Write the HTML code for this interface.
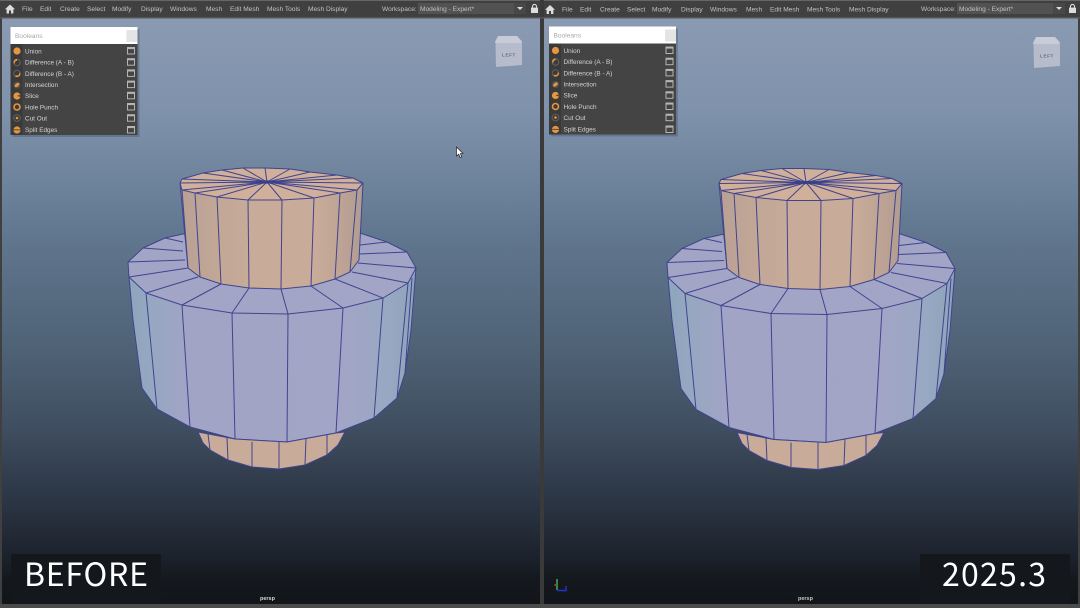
<!DOCTYPE html>
<html><head><meta charset="utf-8"><title>Booleans comparison</title>
<style>
html,body{margin:0;padding:0;background:#3a3a3a;width:1080px;height:608px;overflow:hidden}
svg{display:block}
text{font-family:"Liberation Sans",sans-serif}
.m{font-size:6.6px;fill:#c2c2c2}
.i{font-size:6.4px;fill:#d4d4d4}
.big{font-family:"Noto Sans CJK KR","Liberation Sans",sans-serif;font-size:32px;fill:#fff;font-weight:400}
.l{stroke:#40448f;stroke-width:1;fill:none}
</style></head><body>
<svg width="1080" height="608" viewBox="0 0 1080 608" xmlns="http://www.w3.org/2000/svg">
<defs>
<linearGradient id="bg" x1="0" y1="18" x2="0" y2="604" gradientUnits="userSpaceOnUse">
<stop offset="0" stop-color="#8a9ab2"/><stop offset=".16" stop-color="#7f92ab"/><stop offset=".3" stop-color="#6b8199"/>
<stop offset=".36" stop-color="#627890"/><stop offset=".55" stop-color="#506478"/><stop offset=".7" stop-color="#3f4e60"/>
<stop offset=".82" stop-color="#2c3645"/><stop offset=".92" stop-color="#1c222c"/><stop offset=".96" stop-color="#14181d"/><stop offset="1" stop-color="#12161a"/>
</linearGradient>
<linearGradient id="blue" x1="129" y1="0" x2="416" y2="0" gradientUnits="userSpaceOnUse">
<stop offset="0" stop-color="#8ea6bc"/><stop offset=".08" stop-color="#96a7c1"/><stop offset=".2" stop-color="#a1a4c5"/>
<stop offset=".75" stop-color="#a2a5c6"/><stop offset=".9" stop-color="#98a8c2"/><stop offset="1" stop-color="#8ca4ba"/>
</linearGradient>
<linearGradient id="pk" x1="180" y1="0" x2="363" y2="0" gradientUnits="userSpaceOnUse">
<stop offset="0" stop-color="#b8a094"/><stop offset=".2" stop-color="#c2a797"/><stop offset=".4" stop-color="#c8ab98"/>
<stop offset=".75" stop-color="#c8ab98"/><stop offset=".9" stop-color="#bca295"/><stop offset="1" stop-color="#b09c91"/>
</linearGradient>
<g id="model">
<!-- body -->
<path fill="url(#blue)" d="M128 262L129 277L133 320L142 388L157 409L190 427L235 439L287 442L336 433L374 418L397 398L405 373L411 330L416 268Z"/>
<path class="l" d="M129 277L133 320L142 388L157 409L190 427L235 439L287 442L336 433L374 418L397 398L405 373L411 330L416 268"/>
<path class="l" d="M146 293L157 409M182 305L190 427M232 313L235 439M288 314L287 442M343 308L336 433M383 298L374 418M408 283L397 398M412 278L405 373"/>
<!-- bottom cylinder -->
<path fill="#c8ab98" stroke="#40448f" d="M198 432L203 443L210 450L228 460L252 467L279 469L305 465L327 455L338 445L345 432L336 433L287 442L235 439Z"/>
<path class="l" d="M208 434L210 450M227 438L228 460M252 442L252 467M279 442L279 469M306 438L305 465M327 435L327 455"/>
<!-- ring top -->
<path fill="#a3a5c6" stroke="#40448f" stroke-linejoin="round" d="M128 262L143 248L165 238L183 234L360 233L387 242L407 252L416 268L408 283L383 298L343 308L288 314L232 313L182 305L146 293L129 277Z"/>
<path class="l" d="M198 277L146 293M221 284L182 305M249 288L232 313M281 289L288 314M311 286L343 308M335 279L383 298M352 272L408 283M358 263L416 268M359 254L407 252M360 245L387 242M188 268L129 277M185 260L128 262M183 251L143 248M183 242L165 238"/>
<!-- top cylinder side -->
<path fill="url(#pk)" d="M180 183L188 268L200 277L221 284L249 288L281 289L311 286L335 279L350 272L359 260L363 183Z"/>
<path class="l" d="M180 183L188 268L200 277L221 284L249 288L281 289L311 286L335 279L350 272L359 260L363 183"/>
<path class="l" d="M182 190L188 268M195 193L200 277M217 197L221 284M248 200L249 288M282 200L281 289M314 198L311 286M340 193L335 279M357 190L350 272"/>
<!-- top cap -->
<path fill="#d0b09b" stroke="#40448f" stroke-linejoin="round" d="M180 183L182 179L203 173L222 170L243 168L265 168L290 169L310 172L337 175L353 178L363 183L357 190L340 193L314 198L282 200L248 200L217 197L195 193L182 190Z"/>
<path class="l" d="M267 182L248 200M267 182L282 200M267 182L217 197M267 182L195 193M267 182L182 190M267 182L180 183M267 182L182 179M267 182L203 173M267 182L222 170M267 182L243 168M267 182L265 168M267 182L290 169M267 182L310 172M267 182L337 175M267 182L353 178M267 182L363 183M267 182L357 190M267 182L340 193M267 182L314 198"/>
<ellipse cx="267" cy="182" rx="12" ry="1.6" fill="#3b3f88"/>
</g>
<g id="box"><rect x="0" y="0" width="7" height="6.5" fill="none" stroke="#b5b5b5" stroke-width="1"/><rect x="0" y="0" width="7" height="1.6" fill="#b5b5b5"/></g>
<g id="home"><path d="M5 0.5L0 5.2H1.6V9.5H4V6.5H6V9.5H8.4V5.2H10Z" fill="#ddd"/></g>
<g id="lock"><rect x="0" y="3.6" width="7" height="5.4" fill="#ddd"/><path d="M1.5 3.6V2.4a2 2 0 0 1 4 0V3.6" fill="none" stroke="#ddd" stroke-width="1.1"/></g>
<g id="panel">
<rect x="2" y="2" width="127" height="108" fill="#33415a" opacity=".3"/>
<rect x="0" y="0" width="127" height="17" fill="#fff"/>
<rect x="116" y="3" width="11" height="12" fill="#e4e4e4"/>
<text x="4.500" y="11" fill="#a8a8a8" style="font-size:6.6px">Booleans</text>
<rect x="0" y="17" width="127" height="91" fill="#444"/>
<rect x="0" y="17" width="12" height="91" fill="#3a3a3a"/>
<g fill="#e8963d">
<circle cx="6.500" cy="24" r="3.600"/>
<circle cx="6.500" cy="35.500" r="3.300" fill="none" stroke="#666" stroke-width="1"/><path d="M3 35.500a3.600 3.600 0 0 1 3.500-3.600v2a2 2 0 0 0-1.500 3.500z"/>
<circle cx="6.500" cy="46.500" r="3.300" fill="none" stroke="#606060" stroke-width="1"/><path d="M10 46.500a3.600 3.600 0 0 1-5.500 3l1-1.500a2 2 0 0 0 3-2.500z"/>
<circle cx="6.500" cy="58" r="3.600" fill="#505050"/><ellipse cx="6.500" cy="58" rx="2.800" ry="1.600" transform="rotate(-40 6.500 58)"/>
<circle cx="6.500" cy="69" r="3.600"/><path d="M6.500 69l3.200-1.400.3 2.400z" fill="#444"/>
<circle cx="6.500" cy="80" r="3" fill="none" stroke="#e8963d" stroke-width="1.600"/>
<circle cx="6.500" cy="91" r="3.400" fill="none" stroke="#606060" stroke-width="1"/><circle cx="6.500" cy="91" r="1.300"/>
<circle cx="6.500" cy="103" r="3.600"/><rect x="2.500" y="102.400" width="8" height=".9" fill="#444"/>
</g>
<text class="i" x="14.500" y="26.400">Union</text>
<text class="i" x="14.500" y="37.600">Difference (A - B)</text>
<text class="i" x="14.500" y="48.800">Difference (B - A)</text>
<text class="i" x="14.500" y="60">Intersection</text>
<text class="i" x="14.500" y="71.200">Slice</text>
<text class="i" x="14.500" y="82.400">Hole Punch</text>
<text class="i" x="14.500" y="93.600">Cut Out</text>
<text class="i" x="14.500" y="105">Split Edges</text>
<use href="#box" x="117" y="20.500"/><use href="#box" x="117" y="31.700"/><use href="#box" x="117" y="42.900"/><use href="#box" x="117" y="54.100"/><use href="#box" x="117" y="65.300"/><use href="#box" x="117" y="76.500"/><use href="#box" x="117" y="87.700"/><use href="#box" x="117" y="99.500"/>
</g>
<g id="cube">
<path d="M0 7L3 1H22L27 6.500L26.500 8L0.500 8Z" fill="#c8ccd8"/>
<path d="M0.500 8H27V30L1 32Z" fill="#b6bccb"/>
<text x="14" y="21.500" text-anchor="middle" style="font-size:4.600px;letter-spacing:.6px;font-weight:bold" fill="#666a78">LEFT</text>
</g>
</defs>

<rect width="1080" height="608" fill="#404040"/>
<rect x="0" y="0" width="1080" height="1" fill="#666"/>
<rect x="2" y="18" width="538" height="586" fill="url(#bg)"/>
<rect x="544" y="18" width="534" height="586" fill="url(#bg)"/>
<rect x="540" y="0" width="4" height="608" fill="#3a3a3a"/>
<rect x="0" y="604" width="1080" height="4" fill="#4b4b4b"/>
<rect x="0" y="17" width="1080" height="1.500" fill="#555"/>

<use href="#model"/>
<use href="#model" x="539" y="0.500"/>

<!-- left menu -->
<use href="#home" x="5" y="4"/>
<text class="m" x="22" y="11">File</text><text class="m" x="40" y="11">Edit</text><text class="m" x="60" y="11">Create</text><text class="m" x="87" y="11">Select</text><text class="m" x="112" y="11">Modify</text><text class="m" x="141" y="11">Display</text><text class="m" x="170" y="11">Windows</text><text class="m" x="206" y="11">Mesh</text><text class="m" x="230" y="11">Edit Mesh</text><text class="m" x="267" y="11">Mesh Tools</text><text class="m" x="308" y="11">Mesh Display</text>
<text class="m" x="382" y="11">Workspace:</text>
<rect x="418" y="3" width="108" height="11" fill="#525252"/><rect x="514" y="3" width="12" height="11" fill="#484848"/>
<text class="m" x="420" y="11">Modeling - Expert*</text>
<path d="M517 7H523L520 10Z" fill="#ddd"/>
<use href="#lock" x="531" y="4"/>

<!-- right menu -->
<use href="#home" x="545" y="4.500"/>
<text class="m" x="562" y="11.500">File</text><text class="m" x="580" y="11.500">Edit</text><text class="m" x="600" y="11.500">Create</text><text class="m" x="627" y="11.500">Select</text><text class="m" x="652" y="11.500">Modify</text><text class="m" x="681" y="11.500">Display</text><text class="m" x="710" y="11.500">Windows</text><text class="m" x="746" y="11.500">Mesh</text><text class="m" x="770" y="11.500">Edit Mesh</text><text class="m" x="807" y="11.500">Mesh Tools</text><text class="m" x="849" y="11.500">Mesh Display</text>
<text class="m" x="921" y="11">Workspace:</text>
<rect x="957" y="3" width="108" height="11" fill="#525252"/><rect x="1053" y="3" width="12" height="11" fill="#484848"/>
<text class="m" x="959" y="11">Modeling - Expert*</text>
<path d="M1056 7H1062L1059 10Z" fill="#ddd"/>
<use href="#lock" x="1069" y="4"/>

<use href="#panel" x="10.500" y="27"/>
<use href="#panel" x="549" y="26.500"/>
<use href="#cube" x="495" y="35"/>
<use href="#cube" x="1033" y="36"/>

<!-- cursor -->
<path d="M456.500 147V156L458.700 154.200L460.200 157.500L461.800 156.800L460.300 153.700L463 153.500Z" fill="#fff" stroke="#222" stroke-width=".7"/>

<!-- labels -->
<rect x="11" y="554" width="150" height="50" fill="#14181d"/>
<text class="big" x="24" y="586" textLength="124" lengthAdjust="spacing">BEFORE</text>
<rect x="920" y="554" width="150" height="50" fill="#14181d"/>
<text class="big" x="942" y="586" textLength="104" lengthAdjust="spacing">2025.3</text>
<text x="260" y="600" style="font-size:5.500px;font-weight:bold" fill="#d5d5d5">persp</text>
<text x="798" y="600" style="font-size:5.500px;font-weight:bold" fill="#c5c5c5">persp</text>

<!-- axis -->
<path d="M557 579V590" stroke="#2f8a45" stroke-width="2"/>
<path d="M555.500 584V586" stroke="#b5302e" stroke-width="2"/>
<path d="M557 590.500H566V586" stroke="#2230d0" stroke-width="1.500" fill="none"/>
</svg>
</body></html>
